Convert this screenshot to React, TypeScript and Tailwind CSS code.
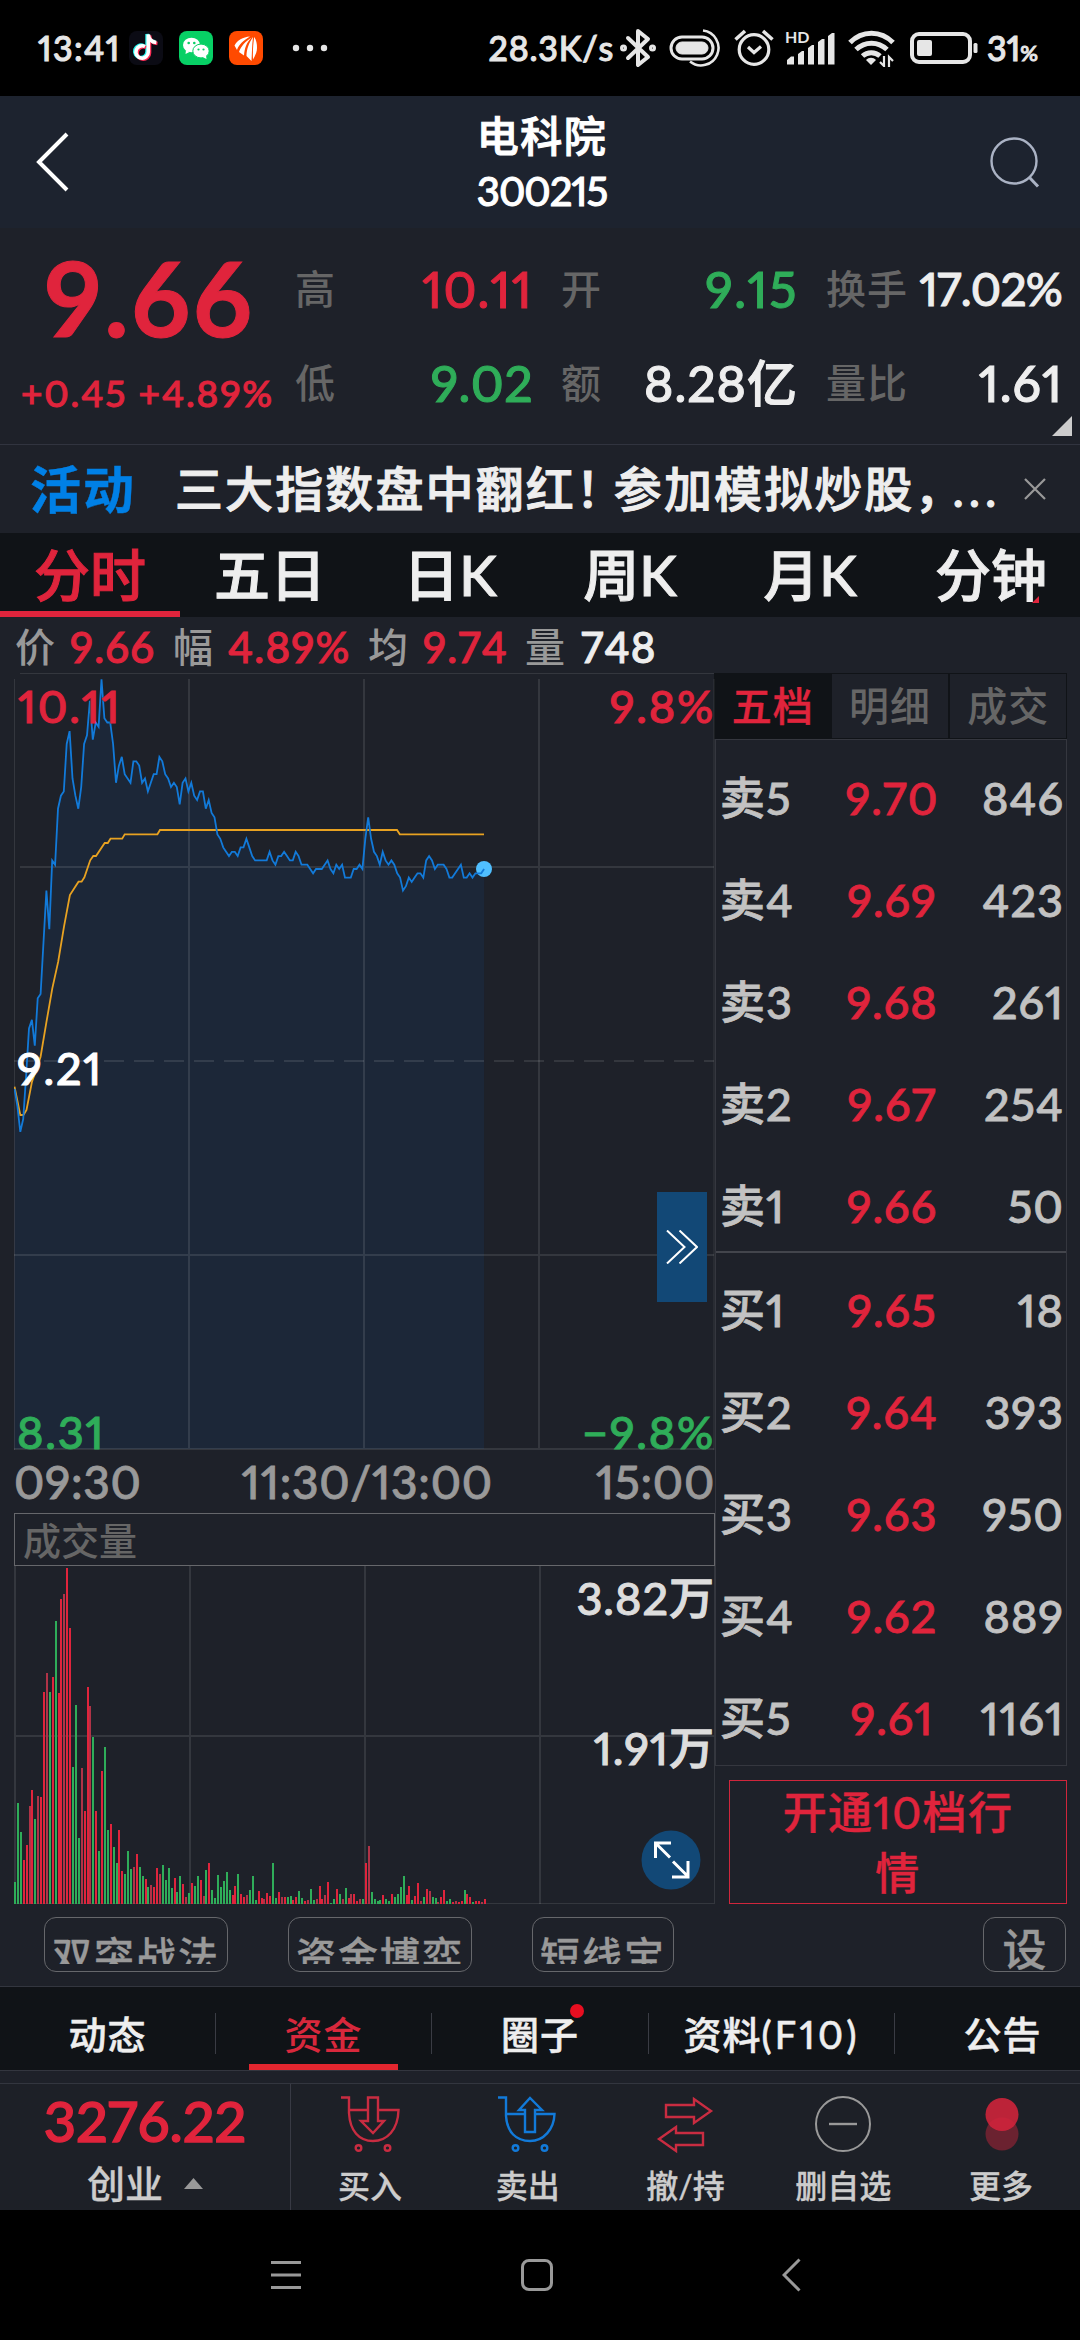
import type { ReactNode } from 'react';

const RED = '#e0243c';
const GREEN = '#2fad59';

// minute prices in cents, starting at 09:30
const PRICES = [
  915, 911, 905, 908, 918, 929, 931, 925, 936, 937, 949, 961, 952, 968, 967, 980, 983, 984, 995, 998,
  987, 983, 980, 985, 995, 997, 1005, 996, 1000, 999, 1010, 1001, 1000, 1000, 995, 986, 990, 992, 988,
  987, 986, 991, 991, 990, 986, 987, 984, 986, 988, 988, 992, 991, 988, 987, 985, 986, 985, 981, 986,
  987, 984, 986, 983, 982, 984, 984, 980, 982, 979, 978, 974, 973, 971, 970, 969, 970, 970, 969, 971,
  971, 973, 971, 969, 968, 968, 968, 968, 968, 970, 968, 967, 969, 969, 970, 969, 968, 968, 970, 969,
  967, 967, 967, 966, 965, 966, 966, 966, 967, 968, 966, 965, 967, 966, 967, 964, 964, 964, 966, 966,
  967, 966, 973, 978, 973, 970, 969, 967, 970, 968, 967, 968, 967, 965, 964, 961, 962, 964, 963, 964,
  965, 965, 964, 968, 969, 968, 966, 967, 967, 967, 966, 964, 964, 965, 966, 967, 964, 964, 965, 964,
  965, 965, 965, 966,
];

const AVERAGE =
  '0.5,413.7 6.3,442 9.4,442 12.5,437 18,408.7 26.6,383.7 32.5,348.7 38.3,315.3 44.2,288.7 50,253.7 55.9,222 64.5,208.7 67.6,208.7 70.4,204.3 76.2,187.3 79.3,183 82,183 90.7,170 93.8,170 96.5,165.7 108.2,165.7 110.7,161.3 143.4,161.3 146,157 383,157 385.8,161.3 470,161.3';

// minute volumes, a negative one is a falling minute
const VOLUMES = [
  -61, -282, -202, 124, 165, 274, 319, -239, 302, 299, 594, 646, -594, 635, -792, 590, 854, 868, 940,
  772, -384, -557, -185, 381, 260, 607, 554, -467, 260, -148, 372, -439, -207, 224, -160, -114, 207, 92,
  -84, -148, -98, 103, 140, -103, -78, 70, -47, 53, 47, 100, 84, -109, -67, -100, -44, 72, -33, -78, 56,
  19, -30, 58, -50, -78, 67, 22, -95, 114, -39, -16, -81, -47, -64, -89, -39, 25, 50, -84, 28, 19, 25,
  -39, -78, -11, 36, 16, 14, 30, 22, -114, -16, 33, 19, 19, -19, -22, 11, 19, -36, -16, 8, 11, -42, -11,
  14, 50, 14, 25, 61, -2, -14, 42, -28, 14, -44, 16, 28, 28, 8, 14, -14, 114, 162, -33, -14, -8, -11, 25,
  -14, -8, 28, -19, -28, -47, -78, 25, 50, -11, 22, 58, 8, -19, 42, 36, -19, -16, 5, 19, 39, -8, -14, 5,
  8, 5, 8, -39, 28, 19, -5, 8, 8, 5, 14,
];

const SELLS = [
  ['卖5', '9.70', '846'],
  ['卖4', '9.69', '423'],
  ['卖3', '9.68', '261'],
  ['卖2', '9.67', '254'],
  ['卖1', '9.66', '50'],
];

const BUYS = [
  ['买1', '9.65', '18'],
  ['买2', '9.64', '393'],
  ['买3', '9.63', '950'],
  ['买4', '9.62', '889'],
  ['买5', '9.61', '1161'],
];

function StatusBar() {
  return (
    <div className="flex h-24 shrink-0 items-center bg-black pr-[42px] pl-[38px] text-[34px] leading-none text-[#e6e6e6]">
      <span className="w-[91px] tracking-[1.4px]">13:41</span>
      <svg width="34" height="34" viewBox="0 0 34 34" className="mr-4">
        <rect width="34" height="34" rx="8" fill="#0b0b14" />
        <g fill="none" strokeWidth="3.6">
          <path d="M16 15.5a6.2 6.2 0 1 0 3.300 5.500V3.500c.4 4.500 3.500 7.500 8 8" stroke="#25f4ee" transform="translate(-1.2 -.6)" />
          <path d="M16 15.500a6.200 6.200 0 1 0 3.300 5.500V3.500c.4 4.500 3.500 7.500 8 8" stroke="#fe2c55" transform="translate(1.2 1)" />
          <path d="M16 15.500a6.200 6.200 0 1 0 3.300 5.500V3.500c.4 4.500 3.500 7.500 8 8" stroke="#fff" />
        </g>
      </svg>
      <svg width="34" height="34" viewBox="0 0 34 34" className="mr-4">
        <rect width="34" height="34" rx="8" fill="#07d065" />
        <ellipse cx="12.5" cy="14" rx="8.5" ry="7.3" fill="#fff" />
        <path d="M7 19l-.5 4 4-2z" fill="#fff" />
        <ellipse cx="22" cy="20" rx="8.2" ry="6.9" fill="#fff" stroke="#07d065" />
        <path d="M27 24.5l.5 3.5-4-2z" fill="#fff" />
        <g fill="#07d065">
          <circle cx="9.7" cy="12" r="1.3" />
          <circle cx="15.3" cy="12" r="1.3" />
          <circle cx="19.5" cy="18.5" r="1.1" />
          <circle cx="24.5" cy="18.5" r="1.1" />
        </g>
      </svg>
      <svg width="34" height="34" viewBox="0 0 34 34">
        <rect width="34" height="34" rx="8" fill="#ff4a00" />
        <g fill="#fff">
          <path d="M21 5.5C14 6 8 9.5 5.5 14.5L8 19c2-6 6.500-9.500 13-13.500z" />
          <path d="M22.5 6.5C17 10 12 15 10 21l5 3.500c.5-7 2.500-13 7.500-18z" />
          <path d="M24 6c-4 6-6.500 12-6.500 19l5 5c.5-8 .5-16 1.500-24z" />
          <path d="M25.2 6c-1.200 8-1.500 15-1.200 22.500C26 25 28 21 28 17c0-4-.5-8-2.800-11z" />
        </g>
      </svg>
      <svg width="36" height="8" viewBox="0 0 36 8" className="ml-[29px]" fill="#e6e6e6">
        <circle cx="4" cy="4" r="3.2" />
        <circle cx="18" cy="4" r="3.2" />
        <circle cx="32" cy="4" r="3.2" />
      </svg>

      <span className="ml-auto tracking-[0.8px]">28.3K/s</span>
      <svg width="36" height="40" viewBox="0 0 36 40" className="ml-[6px]" fill="none" stroke="#e6e6e6" strokeWidth="4">
        <path d="M8 10l20 19-10 8V3l10 8L8 30" strokeLinejoin="round" strokeLinecap="round" />
        <circle cx="3.5" cy="20" r="1.5" />
        <circle cx="32.5" cy="20" r="1.5" />
      </svg>
      <svg width="54" height="40" viewBox="0 0 54 40" className="ml-[13px]" fill="none" stroke="#e6e6e6">
        <rect x="2" y="9" width="42" height="22" rx="11" strokeWidth="3" />
        <rect x="7" y="14" width="32" height="12" rx="6" fill="#e6e6e6" />
        <path d="M34 2.5a17.5 17.5 0 1 1-13 31" strokeWidth="2.6" />
      </svg>
      <svg width="40" height="40" viewBox="0 0 40 40" className="ml-[11px]" fill="none" stroke="#e6e6e6" strokeWidth="3.2">
        <circle cx="20" cy="21.5" r="14.8" />
        <path d="M1.5 11.5L11 3M38.5 11.5L29 3" strokeWidth="3.6" />
        <path d="M14 19l6 5.5 7-6" />
      </svg>
      <svg width="51" height="36" viewBox="0 0 51 36" className="ml-[11px] overflow-visible" fill="#e6e6e6">
        <text x="0" y="13" fontSize="16" fontWeight="700">
          HD
        </text>
        <path d="M2 34.5V30l4-3.500h3v8zM13 34.500V24l4-3h2v13.500zM23 34.500V18l4-3h2v19.500zM33 34.500V12l4-3h2.500v25.500zM43 34.500V6l4-3h2.500v31.500z" />
      </svg>
      <svg width="47" height="38" viewBox="0 0 47 38" className="ml-[12px]" fill="none" stroke="#e6e6e6" strokeWidth="5">
        <path d="M2 13.5c12-12.5 31-12.5 43 0M8 20.5c9-8.500 22-8.500 31 0M14.5 27c5-4.500 12.500-4.500 17.500 0" />
        <path d="M23 36l-5-5c3-3 7-3 10 0z" fill="#e6e6e6" stroke="none" />
        <path d="M36 27v10l-4-4M41 38V28l4 4" strokeWidth="2.2" />
      </svg>
      <svg width="68" height="32" viewBox="0 0 68 32" className="ml-[15px]" fill="none" stroke="#e6e6e6">
        <rect x="2" y="2" width="58" height="28" rx="7" strokeWidth="4" />
        <rect x="7" y="8" width="15" height="16" rx="2" fill="#e6e6e6" stroke="none" />
        <rect x="63.5" y="11" width="4" height="10" rx="1.5" fill="#e6e6e6" stroke="none" />
      </svg>
      <span className="ml-[9px]">
        31<span className="text-[22px]">%</span>
      </span>
    </div>
  );
}

function Header() {
  return (
    <div className="flex h-[132px] shrink-0 items-center bg-[#1d232f] pr-[40px] pl-[36px] text-white">
      <svg width="46" height="60" viewBox="0 0 46 60" fill="none" stroke="#fff" strokeWidth="4">
        <path d="M31 2L3 30l28 28" />
      </svg>
      <div className="flex flex-1 flex-col items-center pt-[2px] pl-[12px] text-[42px] leading-none">
        <div className="tracking-[1.5px]">电科院</div>
        <div className="mt-[14px] text-[40px] tracking-[-1px]">300215</div>
      </div>
      <svg width="50" height="52" viewBox="0 0 50 52" fill="none" stroke="#aab2c4" strokeWidth="2.4">
        <circle cx="24" cy="25" r="22.5" />
        <path d="M39 41l9 9.5" strokeWidth="3" />
      </svg>
    </div>
  );
}

function Stat({ label, value, className }: { label: string; value: string; className: string }) {
  return (
    <div className="flex h-[94px] items-center justify-between whitespace-nowrap">
      <span className="text-[40px] tracking-[1px] text-[#666] [-webkit-text-stroke:0]">{label}</span>
      <span className={className}>{value}</span>
    </div>
  );
}

function Quote() {
  return (
    <div className="relative flex h-[217px] shrink-0 border-b border-[#31343f] text-[50px] leading-none">
      <div className="flex w-[295px] flex-col items-center text-[#e0243c]">
        <div className="mt-[18px] ml-[4px] text-[103px] font-bold tracking-[2.6px]">9.66</div>
        <div className="mt-[25px] text-[37px] tracking-[1.9px]">+0.45 +4.89%</div>
      </div>
      <div className="mt-[14px] grid w-[770px] grid-cols-[237px_236px_236px] content-start gap-x-[29px]">
        <Stat label="高" value="10.11" className="-mr-px tracking-[1.2px] text-[#e0243c]" />
        <Stat label="开" value="9.15" className="-mr-px tracking-[1.6px] text-[#2fad59]" />
        <Stat label="换手" value="17.02%" className="text-[46px] tracking-[-0.8px] text-[#eee]" />
        <Stat label="低" value="9.02" className="-mr-px tracking-[0.4px] text-[#2fad59]" />
        <Stat label="额" value="8.28亿" className="-mr-px tracking-[1px] text-[#eee]" />
        <Stat label="量比" value="1.61" className="-mr-px tracking-[1px] text-[#eee]" />
      </div>
      <svg className="absolute right-2 bottom-2" width="20" height="20" viewBox="0 0 20 20">
        <path d="M20 0v20H0z" fill="#ccc" />
      </svg>
    </div>
  );
}

function Activity() {
  return (
    <div className="flex h-[88px] shrink-0 items-center pl-[30px] leading-none whitespace-nowrap">
      <span className="w-[145px] text-[51px] font-bold tracking-[2px] text-[#0080e6] [-webkit-text-stroke:0.4px]">活动</span>
      <span className="w-[849px] text-[48px] tracking-[2.1px] text-[#eee]">
        三大指数盘中翻红<span className="tracking-[-10px]">！</span>参加模拟炒股
        <span className="tracking-[-10px]">，</span>
        <span className="tracking-[5px]">...</span>
      </span>
      <svg width="22" height="22" viewBox="0 0 22 22" stroke="#999" strokeWidth="2.2">
        <path d="M1 1l20 20M21 1L1 21" />
      </svg>
    </div>
  );
}

function Periods() {
  return (
    <div className="grid h-[84px] shrink-0 grid-cols-6 bg-[#101317] text-[56px] leading-none text-[#eee]">
      <div className="flex items-center justify-center border-b-[6px] border-[#e0243c] pt-[6px] text-[#e0243c]">分时</div>
      {['五日', '日K', '周K', '月K'].map((t) => (
        <div key={t} className="flex items-center justify-center">
          {t}
        </div>
      ))}
      <div className="relative flex items-center justify-center pl-[2px]">
        分钟
        <svg className="absolute right-[41px] bottom-[14px]" width="7" height="7" viewBox="0 0 7 7">
          <path d="M7 0v7H0z" fill={RED} />
        </svg>
      </div>
    </div>
  );
}

function Summary() {
  const items: [string, string, string][] = [
    ['价', '9.66', 'w-[158px]'],
    ['幅', '4.89%', 'w-[195px]'],
    ['均', '9.74', 'w-[157px]'],
  ];
  return (
    <div className="flex h-[56px] shrink-0 items-center pt-1 pl-[15px] text-[42px] leading-none tracking-[1.2px]">
      {items.map(([label, value, width]) => (
        <div key={label} className={`flex items-center text-[#e0243c] ${width}`}>
          <span className="w-[55px] text-[40px] text-[#999] [-webkit-text-stroke:0]">{label}</span>
          {value}
        </div>
      ))}
      <span className="w-[56px] text-[40px] text-[#999] [-webkit-text-stroke:0]">量</span>
      <span className="text-[#eee]">748</span>
    </div>
  );
}

function PriceChart() {
  const points = PRICES.map((p, i) => `${(0.5 + i * 2.899).toFixed(1)},${(196 - (p - 966) * 4.31).toFixed(1)}`).join(' ');
  return (
    <div className="relative h-[777px] text-[45px] leading-none tracking-[1.8px]">
      <svg width="701" height="777" viewBox="0 0 701 777" fill="none">
        <polygon points={`${points} 470,776 0.5,776`} fill="#1c2738" />
        <g stroke="#fff" strokeOpacity=".1" strokeWidth="2">
          <path d="M6 .5H700" strokeWidth="1" />
          <path d="M6 194H700M0 582H700M0 776H700M175 6V777M350 6V777M525 6V777" />
          <path d="M.5 6V777M700 6V777" strokeWidth="1" />
          <path d="M0 388H700" strokeDasharray="20 10" />
        </g>
        <polyline points={AVERAGE} stroke="#e8a221" strokeWidth="1.8" />
        <circle cx="470" cy="196" r="8" fill="#50bfff" />
        <polyline points={points} stroke="#127ad9" strokeWidth="1.8" />
      </svg>
      <span className="absolute top-[11px] left-[4px] text-[#e0243c]">10.11</span>
      <span className="absolute top-[11px] right-0 text-[#e0243c]">9.8%</span>
      <span className="absolute top-[373px] left-[3px] text-white">9.21</span>
      <span className="absolute bottom-[-5px] left-[3px] text-[#2fad59]">8.31</span>
      <span className="absolute right-0 bottom-[-5px] text-[#2fad59]">−9.8%</span>
      <div className="absolute top-[519px] right-[8px] flex h-[110px] w-[50px] items-center justify-center bg-[#124876]">
        <svg width="32" height="34" viewBox="0 0 32 34" fill="none" stroke="#fff" strokeWidth="2">
          <path d="M1 .5l17.5 16.5L1 33.5M13.5.5L31 17 13.5 33.5" />
        </svg>
      </div>
    </div>
  );
}

function VolumeChart() {
  return (
    <div className="relative h-[338px] text-[45px] leading-none tracking-[1px] text-[#ddd]">
      <svg width="701" height="338" viewBox="0 0 701 338" shapeRendering="crispEdges">
        <g stroke="#fff" strokeOpacity=".1" strokeWidth="2" fill="none">
          <path d="M1 0V338M176 0V338M351 0V338M526 0V338M0 170H700" />
          <path d="M700.5 0V338M0 337.5H700" strokeWidth="1" />
        </g>
        {VOLUMES.map((v, i) => {
          const h = Math.round(Math.abs(v) / 2.8);
          return <rect key={i} x={Math.round(i * 2.9)} y={338 - h} width="2" height={h} fill={v < 0 ? GREEN : i % 3 === 2 ? '#b03347' : RED} />;
        })}
      </svg>
      <span className="absolute top-[10px] right-0">3.82万</span>
      <span className="absolute top-[160px] right-0">1.91万</span>
      <svg className="absolute right-[14px] bottom-[14px]" width="60" height="60" viewBox="0 0 60 60" fill="none" stroke="#fff" strokeWidth="3">
        <circle cx="30" cy="30" r="29.5" fill="#124876" stroke="none" />
        <path d="M14.5 28V13H30M14.5 13L29 27.500M32 31.500L46.500 46M47 31v16H31" />
      </svg>
    </div>
  );
}

function Rows({ rows }: { rows: string[][] }) {
  return (
    <>
      {rows.map(([label, price, amount]) => (
        <div key={label} className="grid h-[68px] grid-cols-[127px_90px_1fr] items-center pb-[3px] tracking-[1px]">
          <span>{label}</span>
          <span className="justify-self-center">
            <span className="text-[#e0243c]">{price}</span>
          </span>
          <span className="justify-self-end">{amount}</span>
        </div>
      ))}
    </>
  );
}

function OrderBook() {
  return (
    <div className="flex w-[353px] flex-col leading-none">
      <div className="grid h-[66px] grid-cols-3 text-[40px] tracking-[1px] text-[#666]">
        <div className="flex items-center justify-center bg-[#101317] text-[#e0243c] [-webkit-text-stroke:0.4px]">五档</div>
        <div className="flex items-center justify-center border border-l-0 border-[#101317] [-webkit-text-stroke:0]">明细</div>
        <div className="flex items-center justify-center border border-[#101317] [-webkit-text-stroke:0]">成交</div>
      </div>
      <div className="ml-px h-[1027px] border border-[#35373f] text-[45px] text-[#c2c2c2] [-webkit-text-stroke:0.8px]">
        <div className="flex h-[513px] flex-col gap-[34px] border-b-2 border-[#43454c] pt-[26px] pr-[2px] pl-[4px]">
          <Rows rows={SELLS} />
        </div>
        <div className="flex flex-col gap-[34px] pt-[25px] pr-[2px] pl-[4px]">
          <Rows rows={BUYS} />
        </div>
      </div>
      <div className="mt-[14px] ml-[15px] flex h-[124px] items-center border border-[#d0263c] px-[50px] pt-[2px] text-center text-[44px] leading-[61px] tracking-[1.3px] text-[#e0243c] [-webkit-text-stroke:0.4px]">
        开通10档行情
      </div>
    </div>
  );
}

function Market() {
  return (
    <div className="flex h-[1231px] shrink-0 pl-[14px]">
      <div className="w-[701px] shrink-0">
        <PriceChart />
        <div className="flex h-[63px] items-center justify-between pt-px text-[46px] leading-none tracking-[0.7px] text-[#999] [-webkit-text-stroke:0.8px]">
          <span>09:30</span>
          <span className="mr-[3px]">11:30/13:00</span>
          <span>15:00</span>
        </div>
        <div className="flex h-[53px] items-center border border-[#66676b] pl-[8px] text-[38px] leading-none text-[#666] [-webkit-text-stroke:0]">
          成交量
        </div>
        <VolumeChart />
      </div>
      <div className="-ml-px">
        <OrderBook />
      </div>
    </div>
  );
}

function Chip({ className, children }: { className: string; children: string }) {
  return (
    <div className={`h-[55px] rounded-[12px] border border-[#66676b] pt-[18px] ${className}`}>
      <div className="h-[28px] overflow-hidden text-center text-[40px] leading-[40px] tracking-[2px] whitespace-nowrap">{children}</div>
    </div>
  );
}

function Chips() {
  return (
    <div className="flex h-[82px] shrink-0 pt-[13px] pr-[14px] pl-[44px] text-[#999] [-webkit-text-stroke:0.3px]">
      <Chip className="w-[184px]">双突战法</Chip>
      <Chip className="ml-[60px] w-[184px]">资金博弈</Chip>
      <Chip className="ml-[60px] w-[142px]">短线宝</Chip>
      <div className="ml-auto flex h-[55px] w-[83px] items-center justify-center rounded-[12px] border border-[#66676b] pt-[8px] text-[44px] leading-none">设</div>
    </div>
  );
}

function InfoTab({ className, children }: { className?: string; children: ReactNode }) {
  return <div className={`relative flex shrink-0 items-center justify-center pt-[11px] ${className}`}>{children}</div>;
}

function InfoTabs() {
  const divider = <div className="mt-[26px] h-[41px] w-px shrink-0 bg-[#3a3c44]" />;
  return (
    <div className="flex h-[85px] shrink-0 overflow-hidden border-y border-[#33363f] bg-[#101317] text-[38px] leading-none tracking-[1px] text-[#eee] [-webkit-text-stroke:0.5px]">
      <InfoTab className="w-[215px]">动态</InfoTab>
      {divider}
      <InfoTab className="w-[215px] text-[#d8283c] [-webkit-text-stroke:0]">
        资金
        <div className="absolute inset-x-[33px] bottom-0 h-[6px] bg-[#e3262f]" />
      </InfoTab>
      {divider}
      <InfoTab className="w-[216px]">
        圈子
        <div className="absolute top-[17px] right-[64px] size-[14px] rounded-full bg-[#e80e20]" />
      </InfoTab>
      {divider}
      <InfoTab className="w-[245px]">
        资料<span className="tracking-[3.2px]">(F10)</span>
      </InfoTab>
      {divider}
      <InfoTab className="w-[215px]">公告</InfoTab>
    </div>
  );
}

function Action({ label, children }: { label: string; children: ReactNode }) {
  return (
    <div className="flex flex-col items-center pt-[12px] text-[32px] leading-none text-[#ccc] [-webkit-text-stroke:0.3px]">
      <svg width="60" height="58" viewBox="0 0 60 58" fill="none" className="overflow-visible">
        {children}
      </svg>
      <div className="mt-[16px]">{label}</div>
    </div>
  );
}

function BottomBar() {
  return (
    <div className="mt-[12px] flex h-[127px] shrink-0 border-t border-[#33363f] bg-[#1d2027] leading-none">
      <div className="flex w-[291px] flex-col items-center border-r border-[#383a44]">
        <div className="mt-[9px] text-[56px] text-[#e0243c] [-webkit-text-stroke:1.4px]">3276.22</div>
        <div className="mt-[15px] flex items-center text-[38px] text-[#ccc] [-webkit-text-stroke:0.3px]">
          创业
          <svg width="19" height="11" viewBox="0 0 19 11" className="ml-[21px]">
            <path d="M9.5 0L19 11H0z" fill="#999" />
          </svg>
        </div>
      </div>
      <div className="grid flex-1 grid-cols-5">
        <Action label="买入">
          <g stroke="#c92c41" strokeWidth="2.4" transform="translate(-1 0)">
            <path d="M2 1.5h8V17C11 35 20 45 34 45s25-11 25.500-31H39M29 14H9M29 1.500h10V25h6L34 37 22 25h7z" />
            <circle cx="19.5" cy="52" r="2.8" />
            <circle cx="48.5" cy="52" r="2.8" />
          </g>
        </Action>
        <Action label="卖出">
          <g stroke="#127ad9" strokeWidth="2.4" transform="translate(-2 0)">
            <path d="M2 1.5h8V20C11 36 20 45 34 45s24-12 24.500-27H39M29 18H9M29 36h10V14h7L34 2 23 14h6z" />
            <circle cx="19.5" cy="52" r="2.8" />
            <circle cx="48.5" cy="52" r="2.8" />
          </g>
        </Action>
        <Action label="撤/持">
          <path d="M11 9h28V3l17 12-17 12v-6H11zM48 37H21v-6L4 43l17 12v-6h27z" stroke="#c92c41" strokeWidth="2.4" />
        </Action>
        <Action label="删自选">
          <circle cx="30" cy="28" r="27" stroke="#999" strokeWidth="2" />
          <path d="M16 28h28" stroke="#999" strokeWidth="2.4" />
        </Action>
        <Action label="更多">
          <circle cx="31" cy="38" r="16.5" fill="#6b2230" />
          <circle cx="31" cy="18.5" r="16.5" fill="#d3233b" fillOpacity=".88" />
        </Action>
      </div>
    </div>
  );
}

function NavBar() {
  return (
    <div className="flex h-[130px] shrink-0 items-center bg-black pl-[271px]">
      <svg width="30" height="28" viewBox="0 0 30 28" stroke="#999" strokeWidth="3">
        <path d="M0 1.5h30M0 14h30M0 26.5h30" />
      </svg>
      <div className="ml-[220px] size-8 rounded-lg border-[3px] border-[#999]" />
      <svg width="19" height="34" viewBox="0 0 19 34" className="ml-[229px]" fill="none" stroke="#999" strokeWidth="3">
        <path d="M17.5 1.5L2 17l15.5 15.5" />
      </svg>
    </div>
  );
}

export default function App() {
  return (
    <div className="flex h-[2340px] w-[1080px] flex-col overflow-hidden bg-[#1e2129] font-['Lato','Noto_Sans_CJK_SC',sans-serif] font-medium proportional-nums [-webkit-text-stroke:1px] [font-kerning:none]">
      <StatusBar />
      <Header />
      <Quote />
      <Activity />
      <Periods />
      <Summary />
      <Market />
      <Chips />
      <InfoTabs />
      <BottomBar />
      <NavBar />
    </div>
  );
}
